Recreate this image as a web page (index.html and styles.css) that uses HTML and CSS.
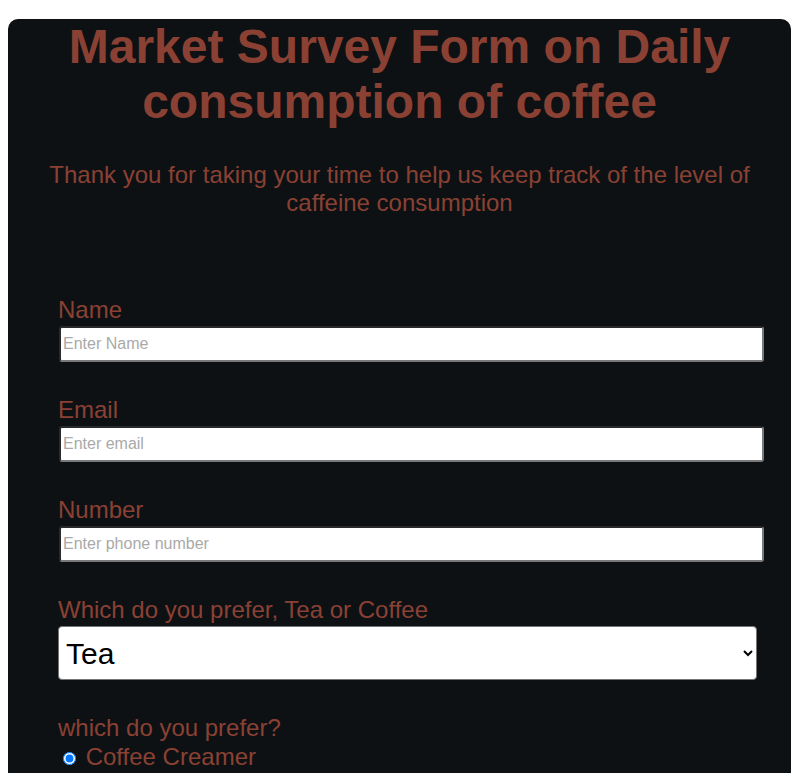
FILE: index.html
```html
<!DOCTYPE html>
<html lang="en">
<head>
<meta charset="utf-8">
<title>Market Survey Form</title>
<link rel="stylesheet" href="styles.css">
</head>
<body>
<main class="card">
  <h1 class="title">Market Survey Form on Daily consumption of coffee</h1>
  <p class="subtitle">Thank you for taking your time to help us keep track of the level of caffeine consumption</p>
  <form class="form">
    <div class="group">
      <label class="label" for="name">Name</label>
      <input class="field" id="name" type="text" placeholder="Enter Name">
    </div>
    <div class="group">
      <label class="label" for="email">Email</label>
      <input class="field" id="email" type="email" placeholder="Enter email">
    </div>
    <div class="group">
      <label class="label" for="number">Number</label>
      <input class="field" id="number" type="tel" placeholder="Enter phone number">
    </div>
    <div class="group">
      <label class="label" for="drink">Which do you prefer, Tea or Coffee</label>
      <select class="picker" id="drink">
        <option>Tea</option>
        <option>Coffee</option>
      </select>
    </div>
    <div class="group">
      <p class="label label-tight">which do you prefer?</p>
      <label class="option"><input class="radio" type="radio" name="extra" checked> Coffee Creamer</label>
    </div>
  </form>
</main>
</body>
</html>
```

FILE: styles.css
```css
html, body {
  margin: 0;
  padding: 0;
  background: #ffffff;
}

body {
  font-family: "Liberation Sans", Arial, sans-serif;
  color: #8a4134;
}

.card {
  margin: 19px 10px 40px 8px;
  background: #0e1113;
  border-radius: 10px;
  padding: 0 0 40px;
}

.title {
  margin: 0 0 32px;
  font-size: 48px;
  font-weight: bold;
  line-height: normal;
  text-align: center;
}

.subtitle {
  margin: 0;
  font-size: 24px;
  line-height: normal;
  text-align: center;
}

.form {
  padding: 79px 0 0 50px;
}

.group {
  margin-bottom: 34px;
}

.label {
  display: block;
  margin: 0 0 2px;
  font-size: 24px;
  line-height: normal;
}

.label-tight {
  margin-bottom: 1px;
}

.field {
  display: block;
  box-sizing: border-box;
  width: 705px;
  height: 36px;
  margin: 0 0 0 1px;
  padding: 1px 2px;
  font-family: "Liberation Sans", Arial, sans-serif;
  font-size: 16px;
  color: #000;
  background: #ffffff;
  border-style: solid;
  border-width: 2px;
  border-color: #2a2a2a #7a7a7a #7a7a7a #2a2a2a;
  border-radius: 3px;
}

.field::placeholder {
  color: #a9a9a9;
}

.picker {
  display: block;
  box-sizing: border-box;
  width: 699px;
  height: 54px;
  margin: 0;
  padding: 0 3px;
  font-family: "Liberation Sans", Arial, sans-serif;
  font-size: 30px;
  color: #000;
  background-color: #ffffff;
  border: 1px solid #767676;
  border-radius: 4px;
}

.option {
  display: block;
  font-size: 24px;
  line-height: normal;
}

.radio {
  margin: 3px 3px 0 5px;
}
```
